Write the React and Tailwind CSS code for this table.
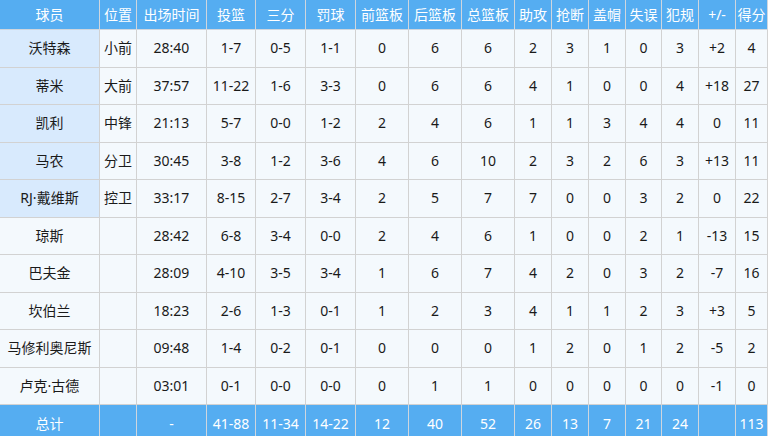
const headers = ["球员", "位置", "出场时间", "投篮", "三分", "罚球", "前篮板", "后篮板", "总篮板", "助攻", "抢断", "盖帽", "失误", "犯规", "+/-", "得分"];
const widths = [100, 37, 70, 49, 50, 50, 53, 53, 53, 37, 37, 37, 36, 37, 37, 32];

const players = [
  ["沃特森", "小前", "28:40", "1-7", "0-5", "1-1", "0", "6", "6", "2", "3", "1", "0", "3", "+2", "4"],
  ["蒂米", "大前", "37:57", "11-22", "1-6", "3-3", "0", "6", "6", "4", "1", "0", "0", "4", "+18", "27"],
  ["凯利", "中锋", "21:13", "5-7", "0-0", "1-2", "2", "4", "6", "1", "1", "3", "4", "4", "0", "11"],
  ["马农", "分卫", "30:45", "3-8", "1-2", "3-6", "4", "6", "10", "2", "3", "2", "6", "3", "+13", "11"],
  ["RJ·戴维斯", "控卫", "33:17", "8-15", "2-7", "3-4", "2", "5", "7", "7", "0", "0", "3", "2", "0", "22"],
  ["琼斯", "", "28:42", "6-8", "3-4", "0-0", "2", "4", "6", "1", "0", "0", "2", "1", "-13", "15"],
  ["巴夫金", "", "28:09", "4-10", "3-5", "3-4", "1", "6", "7", "4", "2", "0", "3", "2", "-7", "16"],
  ["坎伯兰", "", "18:23", "2-6", "1-3", "0-1", "1", "2", "3", "4", "1", "1", "2", "3", "+3", "5"],
  ["马修利奥尼斯", "", "09:48", "1-4", "0-2", "0-1", "0", "0", "0", "1", "2", "0", "1", "2", "-5", "2"],
  ["卢克·古德", "", "03:01", "0-1", "0-0", "0-0", "0", "1", "1", "0", "0", "0", "0", "0", "-1", "0"],
];

const totals = ["总计", "", "-", "41-88", "11-34", "14-22", "12", "40", "52", "26", "13", "7", "21", "24", "", "113"];

export default function App() {
  return (
    <div
      className="w-[768px] h-[436px] overflow-hidden bg-white text-[14px] text-[#1a1a1a]"
      style={{ fontFamily: "'Noto Sans', 'Noto Sans CJK SC', sans-serif" }}
    >
      <table className="table-fixed border-separate border-spacing-0 w-[768px]">
        <colgroup>
          {widths.map((w, i) => (
            <col key={i} style={{ width: w }} />
          ))}
        </colgroup>
        <thead>
          <tr className="h-[30px] bg-[#55adf1] text-white">
            {headers.map((h) => (
              <th key={h} className="p-0 font-normal text-center whitespace-nowrap border-r border-b border-[#cfd6de] leading-none">
                {h}
              </th>
            ))}
          </tr>
        </thead>
        <tbody>
          {players.map((row, r) => (
            <tr key={r} className="h-[37.5px]">
              {row.map((v, c) => (
                <td
                  key={c}
                  className={`p-0 text-center whitespace-nowrap border-r border-b border-[#d2d2d2] leading-none ${
                    c === 0 && r < 5 ? "bg-[#d8eafd]" : "bg-[#f4f9fd]"
                  }`}
                >
                  {v}
                </td>
              ))}
            </tr>
          ))}
          <tr className="h-[37.5px] bg-[#55adf1] text-white">
            {totals.map((v, c) => (
              <td key={c} className="p-0 text-center whitespace-nowrap border-r border-[#cfd6de] leading-none">
                {v}
              </td>
            ))}
          </tr>
        </tbody>
      </table>
    </div>
  );
}
